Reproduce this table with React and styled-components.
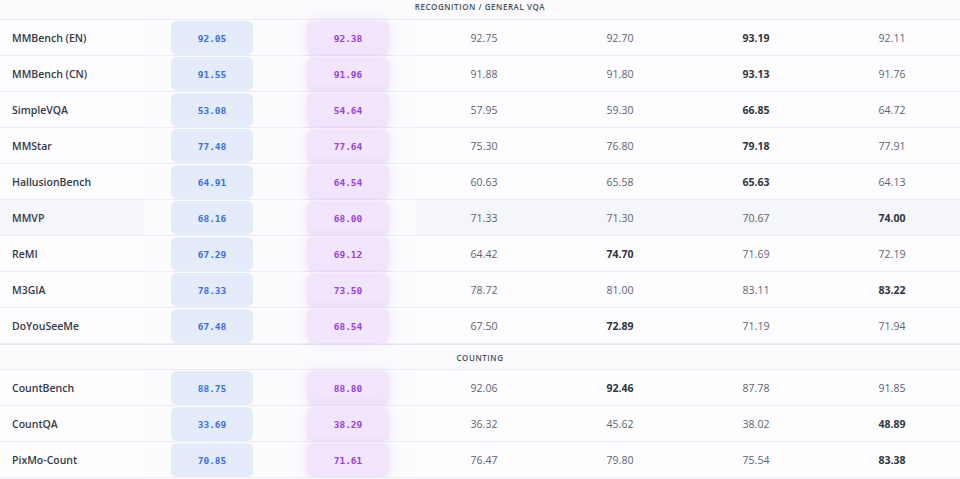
import React from 'react'
import styled, {createGlobalStyle} from 'styled-components'

const Global = createGlobalStyle`
	html, body {
		margin: 0;
		padding: 0;
		background: #fcfcfe;
		overflow: hidden;
	}
	body {
		font-family: "Open Sans", "Liberation Sans", sans-serif;
	}
`

const sections = [
	{
		title: 'Recognition / General VQA',
		rows: [
			{name: 'MMBench (EN)', a: '92.05', b: '92.38', rest: ['92.75', '92.70', '93.19', '92.11'], best: 2},
			{name: 'MMBench (CN)', a: '91.55', b: '91.96', rest: ['91.88', '91.80', '93.13', '91.76'], best: 2},
			{name: 'SimpleVQA', a: '53.08', b: '54.64', rest: ['57.95', '59.30', '66.85', '64.72'], best: 2},
			{name: 'MMStar', a: '77.48', b: '77.64', rest: ['75.30', '76.80', '79.18', '77.91'], best: 2},
			{name: 'HallusionBench', a: '64.91', b: '64.54', rest: ['60.63', '65.58', '65.63', '64.13'], best: 2},
			{name: 'MMVP', a: '68.16', b: '68.00', rest: ['71.33', '71.30', '70.67', '74.00'], best: 3, hover: true},
			{name: 'ReMI', a: '67.29', b: '69.12', rest: ['64.42', '74.70', '71.69', '72.19'], best: 1},
			{name: 'M3GIA', a: '78.33', b: '73.50', rest: ['78.72', '81.00', '83.11', '83.22'], best: 3},
			{name: 'DoYouSeeMe', a: '67.48', b: '68.54', rest: ['67.50', '72.89', '71.19', '71.94'], best: 1},
		],
	},
	{
		title: 'Counting',
		rows: [
			{name: 'CountBench', a: '88.75', b: '88.80', rest: ['92.06', '92.46', '87.78', '91.85'], best: 1},
			{name: 'CountQA', a: '33.69', b: '38.29', rest: ['36.32', '45.62', '38.02', '48.89'], best: 3},
			{name: 'PixMo-Count', a: '70.85', b: '71.61', rest: ['76.47', '79.80', '75.54', '83.38'], best: 3},
		],
	},
]

const Table = styled.div`
	margin-top: -6px;
	width: 960px;
`

const SectionHead = styled.div`
	height: ${p => p.$first ? '25px' : '24px'};
	display: flex;
	align-items: center;
	justify-content: center;
	background: #fbfbfd;
	border-top: ${p => p.$first ? 'none' : '1px solid #e6e8ed'};
	border-bottom: 1px solid #eceef2;
	font-size: 8px;
	font-weight: 600;
	letter-spacing: 0.55px;
	text-transform: uppercase;
	color: #4a505c;
`

const Row = styled.div`
	display: grid;
	grid-template-columns: 144px repeat(6, 136px);
	height: 36px;
	box-sizing: border-box;
	border-bottom: 1px solid #eceef2;
	background: ${p => p.$hover ? '#f5f6f9' : '#fdfdff'};
`

const Name = styled.div`
	display: flex;
	align-items: center;
	padding-left: 12px;
	font-size: 10.5px;
	font-weight: 600;
	color: #343a46;
`

const Hero = styled.div`
	display: flex;
	align-items: center;
	justify-content: center;
	background: #fcfcfe;
	position: relative;
	z-index: ${p => p.$tone === 'purple' ? 1 : 0};
`

const Pill = styled.div`
	width: 82px;
	height: 34px;
	margin-top: 1px;
	align-self: flex-start;
	border-radius: 6px;
	display: flex;
	align-items: center;
	justify-content: center;
	font-family: "DejaVu Sans Mono", "Liberation Mono", monospace;
	font-size: 9.5px;
	font-weight: 700;
	background: ${p => p.$tone === 'purple' ? '#f1e6fb' : '#e4ecfa'};
	color: ${p => p.$tone === 'purple' ? '#9a40e2' : '#3a6ee6'};
	box-shadow: ${p => p.$tone === 'purple' ? '0 0 12px rgba(200, 150, 245, 0.28)' : 'none'};
`

const Value = styled.div`
	display: flex;
	align-items: center;
	justify-content: center;
	font-size: 10.5px;
	font-weight: ${p => p.$best ? 700 : 400};
	color: ${p => p.$best ? '#2f3540' : '#5d6370'};
`

export default function App() {
	return (
		<Table>
			<Global />
			{sections.map((s, si) => (
				<React.Fragment key={s.title}>
					<SectionHead $first={si === 0}>{s.title}</SectionHead>
					{s.rows.map(r => (
						<Row key={r.name} $hover={r.hover}>
							<Name>{r.name}</Name>
							<Hero $tone="blue"><Pill $tone="blue">{r.a}</Pill></Hero>
							<Hero $tone="purple"><Pill $tone="purple">{r.b}</Pill></Hero>
							{r.rest.map((v, i) => (
								<Value key={i} $best={i === r.best}>{v}</Value>
							))}
						</Row>
					))}
				</React.Fragment>
			))}
		</Table>
	)
}
